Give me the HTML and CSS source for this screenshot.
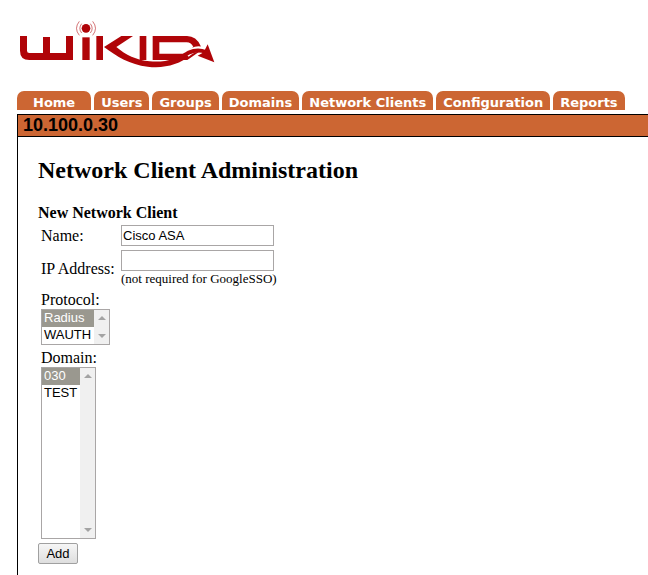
FILE: index.html
```
<!DOCTYPE html>
<html lang="en">

<head>
    <meta charset="UTF-8">
    <meta name="viewport" content="width=device-width, initial-scale=1.0">
    <title>Network Client Administration</title>
    <link rel="stylesheet" href="styles.css">
</head>

<body>
    <header class="header">
        <svg class="logo" viewBox="0 0 660 210" role="img" aria-label="WiKID">
            <g fill="#b00408">
                <!-- W -->
                <path d="M30 78h21v44q0 7 7 7h41V81h21v48h48V78h21v72H58q-28 0-28-28z"/>
                <!-- i -->
                <path d="M217 82h22v68h-22z"/>
                <circle cx="228" cy="55" r="13"/>
                <!-- K -->
                <path d="M259 78h20v72h-20z"/>
                <path d="M334 78h35l-50 33c28 24 60 39 100 43 50 4 82-8 112-28l12 10c-36 28-80 40-130 34-54-6-92-30-131-59z"/>
                <!-- I -->
                <path d="M389 78h20v72h-20z"/>
                <!-- D -->
                <path fill-rule="evenodd" d="M428 78h103q28 0 41 30v14l-40 28H428zM448 97v34h72l30-20q-6-14-20-14z"/>
            </g>
            <g fill="none" stroke="#b00408" stroke-width="3" opacity=".55">
                <path d="M215 41q-11 14 0 28M241 41q11 14 0 28M208 34q-17 21 0 42M248 34q17 21 0 42"/>
            </g>
            <!-- tail with arrow head -->
            <path fill="none" stroke="#fff" stroke-width="17" d="M530 134q26-26 56-12"/>
            <path fill="none" stroke="#b00408" stroke-width="12" d="M508 148q40-38 80-22"/>
            <path fill="#b00408" d="M593 103l20 54-50-20 18-10z"/>
        </svg>
    </header>

    <nav class="tabs">
        <a class="tab tab-home" href="#">Home</a>
        <a class="tab" href="#">Users</a>
        <a class="tab" href="#">Groups</a>
        <a class="tab" href="#">Domains</a>
        <a class="tab" href="#">Network Clients</a>
        <a class="tab" href="#">Configuration</a>
        <a class="tab" href="#">Reports</a>
    </nav>

    <main class="panel">
        <div class="server">10.100.0.30</div>
        <form class="content">
            <h1>Network Client Administration</h1>
            <h2>New Network Client</h2>

            <div class="fields">
                <label for="name">Name:</label>
                <input type="text" id="name" name="name" value="Cisco ASA">

                <label for="ip">IP Address:</label>
                <div class="with-note">
                    <input type="text" id="ip" name="ip">
                    <small>(not required for GoogleSSO)</small>
                </div>
            </div>

            <div class="list-field">
                <label for="protocol">Protocol:</label>
                <div class="list">
                    <select id="protocol" name="protocol" size="2">
                        <option selected>Radius</option>
                        <option>WAUTH</option>
                    </select>
                    <div class="scroll">
                        <span class="arrow-up"></span>
                        <span class="arrow-down"></span>
                    </div>
                </div>
            </div>

            <div class="list-field">
                <label for="domain">Domain:</label>
                <div class="list">
                    <select id="domain" name="domain" size="10">
                        <option selected>030</option>
                        <option>TEST</option>
                    </select>
                    <div class="scroll">
                        <span class="arrow-up"></span>
                        <span class="arrow-down"></span>
                    </div>
                </div>
            </div>

            <button type="button" class="add">Add</button>
        </form>
    </main>
</body>

</html>
```

FILE: styles.css
```
* {
    box-sizing: border-box;
}

body {
    display: flex;
    flex-direction: column;
    min-height: 100vh;
    margin: 0;
    background-color: #fff;
    color: #000;
    font-family: "Liberation Serif", "Times New Roman", serif;
    font-size: 16px;
    line-height: 18px;
}

.header {
    padding: 10px 10px 11px;
}

.logo {
    display: block;
    width: 220px;
    height: 70px;
}

/* Navigation */
.tabs {
    display: flex;
    gap: 3px;
    padding-left: 17px;
}

.tab {
    height: 19px;
    padding: 4px 7px 0;
    border-radius: 7px 7px 0 0;
    background-color: #cc6633;
    color: #fff;
    font-family: "DejaVu Sans", Verdana, sans-serif;
    font-size: 13px;
    font-weight: bold;
    line-height: 16px;
    text-decoration: none;
    white-space: nowrap;
}

.tab-home {
    padding: 4px 16px 0;
}

/* Main panel */
.panel {
    flex: 1;
    margin: 4px 0 0 17px;
    border-top: 1px solid #000;
    border-left: 1px solid #000;
}

.server {
    height: 22px;
    padding-left: 5px;
    border-bottom: 1px solid #000;
    background-color: #cc6633;
    font-family: "Liberation Sans", Arial, sans-serif;
    font-size: 18px;
    font-weight: bold;
    line-height: 20px;
}

.content {
    padding: 19px 20px 12px;
}

h1 {
    margin: 0 0 20px;
    font-size: 24px;
    line-height: 28px;
}

h2 {
    margin: 0;
    font-size: 16px;
    line-height: 18px;
}

/* Form */
.fields {
    display: grid;
    grid-template-columns: 76px 1fr;
    gap: 4px;
    align-items: center;
    padding: 3px 3px 4px;
    white-space: nowrap;
}

input[type="text"] {
    display: block;
    width: 153px;
    height: 21px;
    padding: 1px;
    border: 1px solid #a9a6a6;
    background-color: #fff;
    color: #000;
    font-family: "Liberation Sans", Arial, sans-serif;
    font-size: 13px;
}

small {
    display: block;
    font-size: 13px;
    line-height: 16px;
}

.list-field {
    padding: 0 3px 4px;
}

.list-field label {
    display: block;
}

.list {
    display: inline-flex;
    vertical-align: top;
    border: 1px solid #a9a6a6;
}

select {
    overflow: hidden;
    margin: 0;
    padding: 0;
    border: none;
    border-radius: 0;
    outline: none;
    background-color: #fff;
    font-family: "Liberation Sans", Arial, sans-serif;
    font-size: 13px;
    scrollbar-width: none;
}

option {
    height: 17px;
    min-height: 17px;
    padding: 0 3px 0 2px;
    color: #000;
    line-height: 17px;
}

option:checked {
    background: #9a988f linear-gradient(#9a988f, #9a988f);
    color: #fff;
    -webkit-text-fill-color: #fff;
}

/* Scroll track next to a list */
.scroll {
    display: flex;
    flex-direction: column;
    justify-content: space-between;
    align-items: center;
    width: 15px;
    padding: 6px 0;
    background-color: #f0f0f0;
}

.arrow-up,
.arrow-down {
    border-left: 4px solid transparent;
    border-right: 4px solid transparent;
}

.arrow-up {
    border-bottom: 4px solid #a3a3a3;
}

.arrow-down {
    border-top: 4px solid #a3a3a3;
}

.add {
    display: block;
    width: 40px;
    height: 21px;
    padding: 0;
    border: 1px solid #a0a0a0;
    border-radius: 2px;
    background: linear-gradient(#f6f6f6, #dedede);
    color: #000;
    font-family: "Liberation Sans", Arial, sans-serif;
    font-size: 13px;
}
```
